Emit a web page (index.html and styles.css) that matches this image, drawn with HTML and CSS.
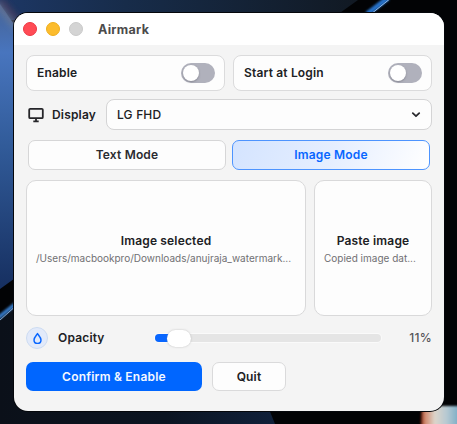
FILE: index.html
```
<!DOCTYPE html>
<html lang="en">
<head>
<meta charset="utf-8">
<title>Airmark</title>
<link rel="stylesheet" href="styles.css">
</head>
<body>
<svg class="wallpaper" viewBox="0 0 457 424" aria-hidden="true">
  <defs>
    <linearGradient id="top" x1="0" x2="1" y1="0" y2="0"><stop offset="0" stop-color="#1d3765"/><stop offset=".35" stop-color="#172c4a"/><stop offset="1" stop-color="#111923"/></linearGradient>
    <linearGradient id="side" x1="0" x2="0" y1="0" y2="1"><stop offset="0" stop-color="#456295"/><stop offset=".17" stop-color="#4875be"/><stop offset=".5" stop-color="#315b99"/><stop offset="1" stop-color="#162f60"/></linearGradient>
    <linearGradient id="bottom" x1="0" x2="1" y1="0" y2="0"><stop offset="0" stop-color="#0b1019"/><stop offset=".6" stop-color="#0b1421"/><stop offset="1" stop-color="#10203a"/></linearGradient>
    <linearGradient id="glow" x1="0" x2="1" y1="0" y2="0"><stop offset="0" stop-color="#6b1707"/><stop offset=".1" stop-color="#d1866a"/><stop offset=".35" stop-color="#ddd5cb"/><stop offset=".65" stop-color="#b5c9d2"/><stop offset="1" stop-color="#70a6c3"/></linearGradient>
    <filter id="soft"><feGaussianBlur stdDeviation="1"/></filter>
    <filter id="haze" x="-1" y="-1" width="3" height="3"><feGaussianBlur stdDeviation="3"/></filter>
  </defs>
  <path d="M0 0H457V424H0Z" fill="#020305"/>
  <path d="M0 0H358L330 20H0Z" fill="url(#top)"/>
  <path d="M0 4L18 30V276L0 289Z" fill="url(#side)"/>
  <path d="M-4 2L18 29" stroke="#6a7d9a" stroke-width="5" filter="url(#haze)"/>
  <path d="M1 0L18 20" stroke="#5b3e5b" stroke-width="3" filter="url(#haze)"/>
  <path d="M367 14L388-2" stroke="#2872ca" stroke-width="5" filter="url(#soft)"/>
  <path d="M371 14L391-2" stroke="#90bced" stroke-width="1"/>
  <path d="M0 318L20 302V409H269L275 424H0Z" fill="url(#bottom)"/>
  <path d="M-2 318L18 302" stroke="#3478c5" stroke-width="4" filter="url(#soft)"/>
  <path d="M0 320L18 304" stroke="#84a6cd" stroke-width="1"/>
  <path d="M421 428Q420 413 423 406H461V428Z" fill="url(#glow)" filter="url(#soft)"/>
</svg>
<main class="window">
  <header class="titlebar">
    <span class="light close"></span><span class="light minimize"></span><span class="light disabled"></span>
    <h1>Airmark</h1>
  </header>
  <section class="content">
    <div class="toggles">
      <div class="setting"><span>Enable</span><span class="switch"></span></div>
      <div class="setting"><span class="login">Start at Login</span><span class="switch"></span></div>
    </div>
    <div class="display">
      <svg class="monitor" viewBox="0 0 16 16"><path d="M2.2 1.8H13.8Q14.8 1.8 14.8 2.8V10.2Q14.8 11.2 13.8 11.2H2.2Q1.2 11.2 1.2 10.2V2.8Q1.2 1.8 2.2 1.8ZM8 11.2V14M5.3 14.3H10.7" fill="none" stroke="#252529" stroke-width="1.8"/></svg>
      <span class="display-label">Display</span>
      <div class="select"><span>LG FHD</span><svg viewBox="0 0 10 8"><path d="M1.8 2.2L5 5.2L8.2 2.2" fill="none" stroke="#29292d" stroke-width="1.8" stroke-linecap="round" stroke-linejoin="round"/></svg></div>
    </div>
    <div class="modes">
      <div class="mode"><span>Text Mode</span></div>
      <div class="mode active"><span>Image Mode</span></div>
    </div>
    <div class="images">
      <div class="image-card"><strong>Image selected</strong><span class="path">/Users/macbookpro/Downloads/anujraja_watermark...</span></div>
      <div class="image-card"><strong>Paste image</strong><span class="copied">Copied image dat...</span></div>
    </div>
    <div class="opacity">
      <span class="drop"><svg viewBox="0 0 12 14"><path d="M6 1.7C4.8 3.5 2.2 6 2.2 8.5C2.2 10.9 3.7 12.3 6 12.3S9.8 10.9 9.8 8.5C9.8 6 7.2 3.5 6 1.7Z" fill="none" stroke="#0866ff" stroke-width="1.6" stroke-linejoin="round"/></svg></span>
      <span class="opacity-label">Opacity</span>
      <div class="slider"><span class="fill"></span><span class="thumb"></span></div>
      <span class="percent">11%</span>
    </div>
    <div class="actions"><div class="button primary"><span>Confirm &amp; Enable</span></div><div class="button quit"><span>Quit</span></div></div>
  </section>
</main>
</body>
</html>
```
FILE: styles.css
```
* { box-sizing: border-box; }
body { margin: 0; width: 457px; height: 424px; padding: 13px 13px 13px 14px; overflow: hidden; background: #020305; font: 600 12px/16px Inter, "Liberation Sans", sans-serif; letter-spacing: .17px; color: #202124; }
.wallpaper { position: absolute; left: 0; top: 0; width: 457px; height: 424px; }
.window { position: relative; width: 430px; height: 398px; overflow: hidden; border-radius: 14px; background: #f4f4f4; box-shadow: 0 0 0 1px #05070b; }
.titlebar { height: 32px; background: #fff; display: flex; align-items: center; padding-left: 9px; gap: 9px; }
.light { width: 14px; height: 14px; border-radius: 50%; border: 1px solid; }
.close { background: #ff4b55; border-color: #ed3844; }
.minimize { background: #fcbc2d; border-color: #eeae1d; }
.disabled { background: #d4d4d4; border-color: #c9c9c9; }
h1 { font-size: 12.5px; line-height: 16px; letter-spacing: .3px; margin: 2px 0 0 6px; color: #4b4b4b; font-weight: 700; }
.content { padding: 10px 12px; }
.toggles { display: flex; gap: 8px; }
.setting { width: 199px; height: 36px; border: 1px solid #dbdbdc; border-radius: 8px; background: #fdfdfd; display: flex; align-items: center; justify-content: space-between; padding: 0 9px 0 10px; }
.switch { width: 34px; height: 20px; border-radius: 10px; background: #b0b1bc; display: flex; align-items: center; padding-left: 2px; }
.switch::after { content: ""; width: 16px; height: 16px; border-radius: 50%; background: #fff; box-shadow: 0 1px 2px #60606b80; }
.display { display: flex; align-items: center; margin-top: 8px; height: 31px; }
.monitor { width: 16px; height: 16px; margin-left: 2px; margin-right: 8px; }
.display-label { width: 54px; }
.select { flex: 1; height: 31px; border: 1px solid #d4d4d5; border-radius: 8px; background: #fdfdfd; display: flex; align-items: center; justify-content: space-between; padding: 0 10px; font-weight: 500; }
.select svg { width: 10px; height: 8px; }
.modes { display: flex; gap: 6px; margin: 10px 2px; }
.mode { width: 198px; height: 30px; border: 1px solid #d6d6d7; border-radius: 7px; background: #fdfdfd; display: flex; align-items: center; justify-content: center; color: #2b2b30; }
.mode.active { background: linear-gradient(110deg, #d4e4ff, #e5eeff 50%, #fff); border-color: #4d94ff; color: #0866ff; }
.images { display: flex; gap: 8px; }
.image-card { width: 280px; height: 136px; border: 1px solid #d9d9da; border-radius: 10px; background: #fdfdfd; display: flex; flex-direction: column; padding: 52px 9px 0; white-space: nowrap; }
.image-card:last-child { width: 118px; }
.image-card strong { font-weight: 600; text-align: center; }
.image-card span { color: #707073; font: 400 10px/14px Inter, sans-serif; letter-spacing: 0; margin-top: 2px; }
.opacity { display: flex; align-items: center; height: 22px; margin-top: 11px; }
.drop { width: 22px; height: 22px; border: 1px solid #cddcf2; border-radius: 50%; background: #e2eafa; display: flex; align-items: center; justify-content: center; }
.drop svg { width: 11px; height: 13px; }
.opacity-label { width: 97px; margin-left: 10px; }
.slider { position: relative; width: 226px; height: 8px; border-radius: 4px; background: #e5e5e5; box-shadow: 0 0 0 1px #fafafa; }
.fill { display: block; width: 25px; height: 8px; border-radius: 4px; background: #0866ff; }
.thumb { position: absolute; left: 12px; top: -4px; width: 24px; height: 17px; border-radius: 9px; background: #fff; box-shadow: 0 0 2px #8888; }
.percent { margin-left: auto; font-weight: 500; letter-spacing: .3px; color: #555559; }
.actions { display: flex; gap: 10px; margin-top: 13px; }
.button { height: 29px; border-radius: 7px; display: flex; align-items: center; justify-content: center; }
.primary { width: 176px; background: #0066ff; color: #f4f8ff; letter-spacing: .22px; }
.quit { width: 74px; background: #fdfdfd; border: 1px solid #dadadb; }
```
